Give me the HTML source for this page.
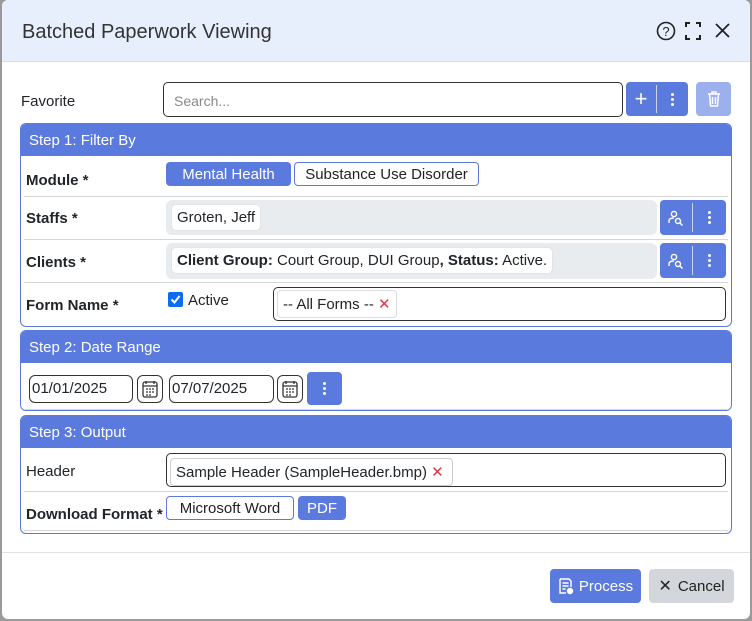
<!DOCTYPE html>
<html><head><meta charset="utf-8"><style>
*{box-sizing:border-box;margin:0;padding:0}
body{width:752px;height:621px;background:#9a9a9a;font-family:"Liberation Sans",sans-serif;position:relative;overflow:hidden;color:#212529}
.dlg{position:absolute;left:2px;top:0;width:748px;height:619px;background:#fff;border-radius:6px;overflow:hidden}
.hd{position:absolute;left:0;top:0;width:748px;height:62px;background:#e8effc;border-bottom:1px solid #d5dbe6}
.a{position:absolute}
.t{font-size:20px;color:#333;left:20px;top:21px}
.lbl{font-size:15px;position:absolute}
.b{font-weight:bold}
.btn{position:absolute;background:#5b7ade;border-radius:4px;color:#fff;display:flex;align-items:center;justify-content:center;font-size:15px}
.ob{position:absolute;background:#fff;border:1px solid #5b7ade;border-radius:4px;display:flex;align-items:center;justify-content:center;font-size:15px;color:#222}
.panel{position:absolute;left:18px;width:712px;border:1px solid #5b7ade;border-radius:6px;overflow:hidden}
.ph{height:32px;background:#5b7ade;color:#fff;font-size:15px;padding:8px 0 0 8px}
.sep{position:absolute;left:4px;right:4px;height:1px;background:#d6d6d6}
.gf{position:absolute;background:#e9ecef;border-radius:6px}
.chip{position:absolute;background:#fff;border-radius:4px;font-size:15px;padding:4px 5px;white-space:nowrap;box-shadow:0 0 1px #bbb}
.inp{position:absolute;border:1px solid #333;border-radius:5px;background:#fff}
.dots{display:flex;flex-direction:column;gap:2px}
.dots i{width:3px;height:3px;background:#fff;border-radius:50%;display:block}
.x{color:#e0344b}
</style></head><body>
<div class="dlg">
 <div class="hd"></div>
 <div class="a t">Batched Paperwork Viewing</div>
 <svg class="a" style="left:654px;top:21px" width="80" height="22" viewBox="0 0 80 22">
  <circle cx="10" cy="10" r="8.5" fill="none" stroke="#222" stroke-width="1.6"/>
  <text x="10" y="15" font-size="13" text-anchor="middle" font-family="Liberation Sans" fill="#222">?</text>
  <path d="M30 6V2h4M40 2h4v4M44 14v4h-4M34 18h-4v-4" fill="none" stroke="#222" stroke-width="2"/>
  <path d="M60 3l13 13M73 3L60 16" stroke="#222" stroke-width="1.8"/>
 </svg>
 <div class="lbl" style="left:19px;top:93px">Favorite</div>
 <div class="inp" style="left:161px;top:82px;width:460px;height:35px"></div>
 <div class="lbl" style="left:172px;top:93px;color:#888;font-size:14px">Search...</div>
 <div class="btn" style="left:624px;top:82px;width:62px;height:34px;justify-content:flex-start">
  <span style="width:30px;text-align:center;font-size:22px;line-height:1">+</span>
  <span style="width:1px;height:28px;background:#c9d3f5"></span>
  <span style="width:30px;display:flex;justify-content:center"><span class="dots"><i></i><i></i><i></i></span></span>
 </div>
 <div class="btn" style="left:694px;top:82px;width:35px;height:34px;background:#9cb0ee">
  <svg width="14" height="16" viewBox="0 0 14 16"><path d="M1 3h12M5 3V1h4v2M2.5 3l1 12h7l1-12M5.5 6v7M8.5 6v7" fill="none" stroke="#fff" stroke-width="1.5"/></svg>
 </div>

 <div class="panel" style="top:123px;height:204px">
  <div class="ph">Step 1: Filter By</div>
 </div>
 <div class="lbl b" style="left:24px;top:172px">Module *</div>
 <div class="btn" style="left:164px;top:162px;width:125px;height:24px">Mental Health</div>
 <div class="ob" style="left:292px;top:162px;width:185px;height:24px">Substance Use Disorder</div>
 <div class="sep" style="left:22px;width:704px;top:196px"></div>
 <div class="lbl b" style="left:24px;top:210px">Staffs *</div>
 <div class="gf" style="left:164px;top:200px;width:491px;height:35px"></div>
 <div class="chip" style="left:170px;top:205px">Groten, Jeff</div>
 <div class="btn" style="left:658px;top:200px;width:66px;height:35px;justify-content:flex-start">
  <span style="width:32px;display:flex;justify-content:center"><svg width="16" height="16" viewBox="0 0 16 16"><circle cx="6" cy="4" r="2.6" fill="none" stroke="#fff" stroke-width="1.4"/><path d="M1 13v-2c0-2 2-3 5-3" fill="none" stroke="#fff" stroke-width="1.4"/><circle cx="10" cy="11" r="2.5" fill="none" stroke="#fff" stroke-width="1.4"/><path d="M12 13l2.5 2.5" stroke="#fff" stroke-width="1.5"/></svg></span>
  <span style="width:1px;height:29px;background:#c9d3f5"></span>
  <span style="width:32px;display:flex;justify-content:center"><span class="dots"><i></i><i></i><i></i></span></span>
 </div>
 <div class="sep" style="left:22px;width:704px;top:239px"></div>
 <div class="lbl b" style="left:24px;top:254px">Clients *</div>
 <div class="gf" style="left:164px;top:243px;width:491px;height:36px"></div>
 <div class="chip" style="left:170px;top:248px"><b>Client Group:</b> Court Group, DUI Group<b>, Status:</b> Active.</div>
 <div class="btn" style="left:658px;top:243px;width:66px;height:35px;justify-content:flex-start">
  <span style="width:32px;display:flex;justify-content:center"><svg width="16" height="16" viewBox="0 0 16 16"><circle cx="6" cy="4" r="2.6" fill="none" stroke="#fff" stroke-width="1.4"/><path d="M1 13v-2c0-2 2-3 5-3" fill="none" stroke="#fff" stroke-width="1.4"/><circle cx="10" cy="11" r="2.5" fill="none" stroke="#fff" stroke-width="1.4"/><path d="M12 13l2.5 2.5" stroke="#fff" stroke-width="1.5"/></svg></span>
  <span style="width:1px;height:29px;background:#c9d3f5"></span>
  <span style="width:32px;display:flex;justify-content:center"><span class="dots"><i></i><i></i><i></i></span></span>
 </div>
 <div class="sep" style="left:22px;width:704px;top:282px"></div>
 <div class="lbl b" style="left:24px;top:297px">Form Name *</div>
 <svg class="a" style="left:166px;top:292px" width="15" height="15"><rect width="15" height="15" rx="2" fill="#0b6cf0"/><path d="M3.5 7.5l3 3 5-6.5" fill="none" stroke="#fff" stroke-width="2"/></svg>
 <div class="lbl" style="left:186px;top:292px">Active</div>
 <div class="inp" style="left:271px;top:287px;width:453px;height:34px"></div>
 <div class="chip" style="left:275px;top:290px;border:1px solid #ddd;box-shadow:none">-- All Forms -- <span class="x">✕</span></div>

 <div class="panel" style="top:330px;height:81px">
  <div class="ph">Step 2: Date Range</div>
 </div>
 <div class="inp" style="left:27px;top:375px;width:104px;height:28px;border-radius:6px"></div>
 <div class="lbl" style="left:30px;top:380px">01/01/2025</div>
 <div class="inp" style="left:135px;top:375px;width:26px;height:28px;border-radius:6px"></div>
 <svg class="a" style="left:140px;top:380px" width="16" height="18" viewBox="0 0 16 18"><rect x="1" y="2" width="14" height="15" rx="2" fill="none" stroke="#333" stroke-width="1.3"/><path d="M1 6h14M4 1v3M12 1v3" stroke="#333" stroke-width="1.3"/><path d="M4 9h2M7 9h2M10 9h2M4 12h2M7 12h2M10 12h2M4 15h2M7 15h2" stroke="#333" stroke-width="1.3"/></svg>
 <div class="inp" style="left:167px;top:375px;width:105px;height:28px;border-radius:6px"></div>
 <div class="lbl" style="left:170px;top:380px">07/07/2025</div>
 <div class="inp" style="left:275px;top:375px;width:26px;height:28px;border-radius:6px"></div>
 <svg class="a" style="left:280px;top:380px" width="16" height="18" viewBox="0 0 16 18"><rect x="1" y="2" width="14" height="15" rx="2" fill="none" stroke="#333" stroke-width="1.3"/><path d="M1 6h14M4 1v3M12 1v3" stroke="#333" stroke-width="1.3"/><path d="M4 9h2M7 9h2M10 9h2M4 12h2M7 12h2M10 12h2M4 15h2M7 15h2" stroke="#333" stroke-width="1.3"/></svg>
 <div class="btn" style="left:305px;top:372px;width:35px;height:33px"><span class="dots"><i></i><i></i><i></i></span></div>
 <div class="sep" style="left:22px;width:704px;top:409px"></div>

 <div class="panel" style="top:415px;height:119px">
  <div class="ph">Step 3: Output</div>
 </div>
 <div class="lbl" style="left:24px;top:463px">Header</div>
 <div class="inp" style="left:164px;top:453px;width:560px;height:34px"></div>
 <div class="chip" style="left:168px;top:458px;border:1px solid #ccc;box-shadow:none;padding:4px 8px 4px 5px">Sample Header (SampleHeader.bmp) <span class="x">✕</span></div>
 <div class="sep" style="left:22px;width:704px;top:491px"></div>
 <div class="lbl b" style="left:24px;top:506px">Download Format *</div>
 <div class="ob" style="left:164px;top:496px;width:128px;height:24px">Microsoft Word</div>
 <div class="btn" style="left:296px;top:496px;width:48px;height:24px">PDF</div>
 <div class="sep" style="left:22px;width:704px;top:530px"></div>

 <div class="a" style="left:0;top:552px;width:748px;height:1px;background:#dee2e6"></div>
 <div class="btn" style="left:548px;top:569px;width:91px;height:34px;gap:5px">
  <svg width="16" height="17" viewBox="0 0 16 17"><path d="M2 1h9l2 2v6M2 1v14h6" fill="none" stroke="#fff" stroke-width="1.4"/><path d="M4.5 5h6M4.5 8h6M4.5 11h3" stroke="#fff" stroke-width="1.4"/><circle cx="12" cy="13" r="3.2" fill="#fff"/></svg>Process</div>
 <div class="a" style="left:647px;top:569px;width:85px;height:34px;background:#d3d6db;border-radius:4px;font-size:15px;display:flex;align-items:center;justify-content:center;gap:6px;color:#222"><span style="font-size:16px">✕</span>Cancel</div>
</div>
</body></html>
